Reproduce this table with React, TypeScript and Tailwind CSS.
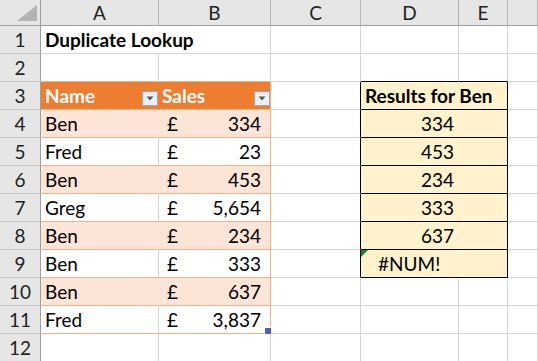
import React from "react";

const FONT = { fontFamily: "Lato, 'Noto Sans', sans-serif" };

type CellProps = {
  className?: string;
  children?: React.ReactNode;
};

function Cell({ className = "", children }: CellProps) {
  return (
    <div
      className={`relative h-[28px] border-b border-r flex items-end leading-[20px] pb-[3px] ${className}`}
    >
      {children}
    </div>
  );
}

function RowHead({ n }: { n: number }) {
  return (
    <div className="h-[28px] bg-[#e6e6e6] border-b border-b-[#c6c6c6] border-r border-r-[#9e9e9e] flex items-end justify-center leading-[20px] pb-[3px] text-[#222]">
      {n}
    </div>
  );
}

function Dropdown() {
  return (
    <div className="w-[16px] h-[15px] bg-[#eeeef2] border border-[#a6a6a6] flex items-center justify-center">
      <svg width="8" height="5" viewBox="0 0 8 5">
        <path d="M0.5 0.5 L7.5 0.5 L4 4.5 Z" fill="#5a5a5a" />
      </svg>
    </div>
  );
}

const data: [string, string][] = [
  ["Ben", "334"],
  ["Fred", "23"],
  ["Ben", "453"],
  ["Greg", "5,654"],
  ["Ben", "234"],
  ["Ben", "333"],
  ["Ben", "637"],
  ["Fred", "3,837"],
];

const results = ["334", "453", "234", "333", "637"];

const G = "border-[#d4d4d4]";

export default function App() {
  return (
    <div
      className="w-[538px] h-[361px] overflow-hidden bg-white text-[19px] text-black"
      style={FONT}
    >
      <div className="grid grid-cols-[41px_118px_112px_90px_98px_49px_1fr]">
        {/* Header row */}
        <div className="h-[26px] bg-[#e6e6e6] border-b border-b-[#9e9e9e] border-r border-r-[#9e9e9e] flex items-end justify-end pr-[3px] pb-[4px]">
          <svg width="20" height="16" viewBox="0 0 20 16">
            <path d="M20 0 L20 16 L0 16 Z" fill="#b4b4b4" />
          </svg>
        </div>
        {["A", "B", "C", "D", "E", ""].map((l, i) => (
          <div
            key={i}
            className="h-[26px] bg-[#e6e6e6] border-b border-b-[#9e9e9e] border-r border-r-[#b4b4b4] flex items-center justify-center leading-[20px] text-[#222] pt-[1px]"
          >
            {l}
          </div>
        ))}

        {/* Row 1 */}
        <RowHead n={1} />
        <Cell className={`col-span-2 ${G} font-bold pl-[4px]`}>Duplicate Lookup</Cell>
        <Cell className={G} />
        <Cell className={G} />
        <Cell className={G} />
        <Cell className={G} />

        {/* Row 2 */}
        <RowHead n={2} />
        <Cell className="border-r-[#d4d4d4] border-b-[#f4b084]" />
        <Cell className="border-r-[#d4d4d4] border-b-[#f4b084]" />
        <Cell className={G} />
        <Cell className="border-r-[#d4d4d4] border-b-black" />
        <Cell className="border-r-[#d4d4d4] border-b-black" />
        <Cell className={G} />

        {/* Row 3 */}
        <RowHead n={3} />
        <Cell className="bg-[#ed7d31] border-r-[#ed7d31] border-b-[#f4b084] text-white font-bold pl-[4px] justify-between">
          <span>Name</span>
          <Dropdown />
        </Cell>
        <Cell className="bg-[#ed7d31] border-r-[#f4b084] border-b-[#f4b084] text-white font-bold pl-[3px] justify-between">
          <span>Sales</span>
          <Dropdown />
        </Cell>
        <Cell className="border-r-black border-b-[#d4d4d4]" />
        <Cell className="col-span-2 bg-[#fff2cc] border-r-black border-b-black font-bold pl-[4px]">
          Results for Ben
        </Cell>
        <Cell className={G} />

        {data.map(([name, amt], i) => {
          const row = i + 4;
          const shaded = i % 2 === 0;
          const bg = shaded ? "bg-[#fce4d6]" : "bg-white";
          const aRight = shaded ? "border-r-[#fce4d6]" : "border-r-[#d4d4d4]";
          const inBox = row <= 9;
          return (
            <React.Fragment key={row}>
              <RowHead n={row} />
              <Cell className={`${bg} ${aRight} border-b-[#f4b084] pl-[4px]`}>{name}</Cell>
              <Cell className={`${bg} border-r-[#f4b084] border-b-[#f4b084] pl-[8px] pr-[9px] justify-between`}>
                <span>£</span>
                <span>{amt}</span>
                {row === 11 && (
                  <div className="absolute right-[-1px] bottom-[-1px] w-[7px] h-[7px] bg-[#4a5ec4] border-l border-t border-white" />
                )}
              </Cell>
              <Cell
                className={`border-b-[#d4d4d4] ${inBox ? "border-r-black" : "border-r-[#d4d4d4]"}`}
              />
              {inBox ? (
                <Cell
                  className={`col-span-2 bg-[#fff2cc] border-r-black border-b-black ${
                    row === 9 ? "pl-[17px]" : "justify-center pl-[7px]"
                  }`}
                >
                  {row === 9 ? (
                    <>
                      <svg className="absolute left-0 top-0" width="7" height="7" viewBox="0 0 7 7">
                        <path d="M0 0 L7 0 L0 7 Z" fill="#1a7f2a" />
                      </svg>
                      #NUM!
                    </>
                  ) : (
                    results[i]
                  )}
                </Cell>
              ) : (
                <>
                  <Cell className={G} />
                  <Cell className={G} />
                </>
              )}
              <Cell className={G} />
            </React.Fragment>
          );
        })}

        {/* Row 12 */}
        <RowHead n={12} />
        <Cell className={G} />
        <Cell className={G} />
        <Cell className={G} />
        <Cell className={G} />
        <Cell className={G} />
        <Cell className={G} />
      </div>
    </div>
  );
}
